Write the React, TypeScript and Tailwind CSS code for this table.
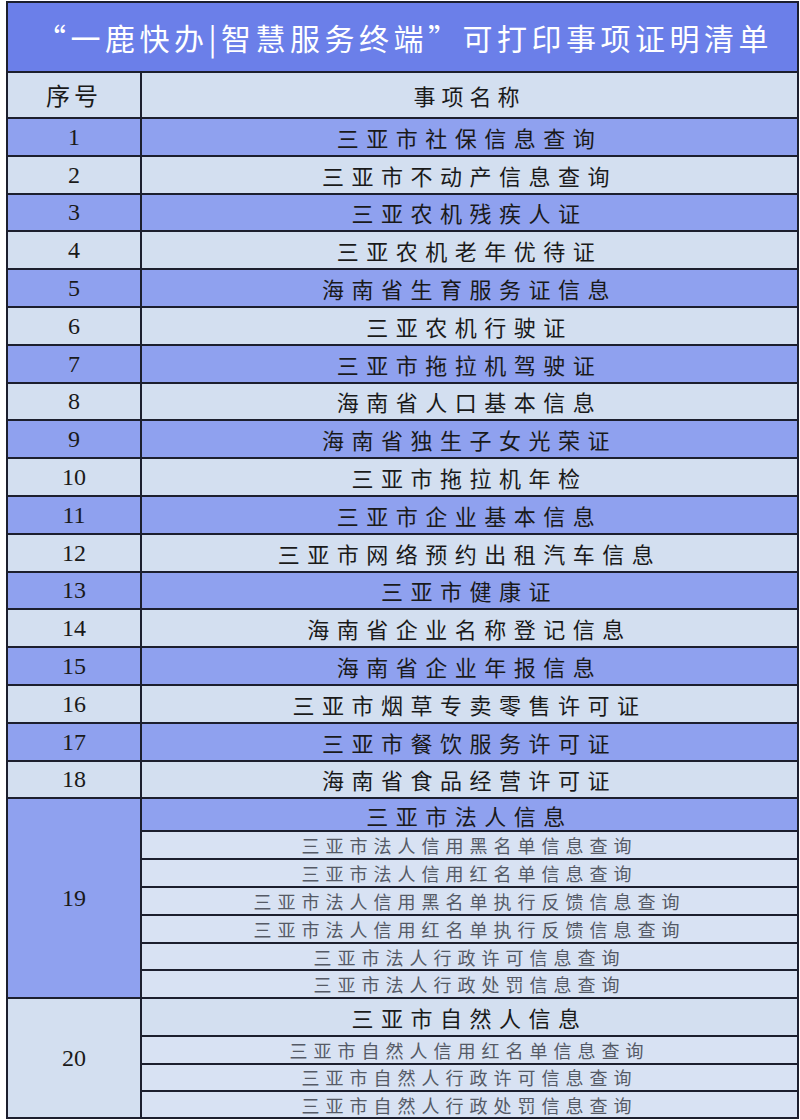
const rows = [
  "三亚市社保信息查询",
  "三亚市不动产信息查询",
  "三亚农机残疾人证",
  "三亚农机老年优待证",
  "海南省生育服务证信息",
  "三亚农机行驶证",
  "三亚市拖拉机驾驶证",
  "海南省人口基本信息",
  "海南省独生子女光荣证",
  "三亚市拖拉机年检",
  "三亚市企业基本信息",
  "三亚市网络预约出租汽车信息",
  "三亚市健康证",
  "海南省企业名称登记信息",
  "海南省企业年报信息",
  "三亚市烟草专卖零售许可证",
  "三亚市餐饮服务许可证",
  "海南省食品经营许可证",
];

const legal = [
  "三亚市法人信用黑名单信息查询",
  "三亚市法人信用红名单信息查询",
  "三亚市法人信用黑名单执行反馈信息查询",
  "三亚市法人信用红名单执行反馈信息查询",
  "三亚市法人行政许可信息查询",
  "三亚市法人行政处罚信息查询",
];

const natural = [
  "三亚市自然人信用红名单信息查询",
  "三亚市自然人行政许可信息查询",
  "三亚市自然人行政处罚信息查询",
];

const cjk = "font-['Noto_Sans_CJK_SC',sans-serif]";
const num = "font-['Liberation_Serif','Noto_Sans_CJK_SC',serif]";

export default function App() {
  return (
    <div className="w-[800px] h-[1120px] bg-white pl-[6px] pt-[1px] leading-none">
      <div className="w-[793px] border-2 border-[#1c1f2e] text-[#1a1a1a]">
        {/* Title */}
        <div
          className={`h-[70px] flex items-center justify-center pl-[4px] bg-[#6b7fe9] border-b-2 border-[#1c1f2e] text-white text-[30px] tracking-[4.5px] ${cjk}`}
        >
          “一鹿快办|智慧服务终端”可打印事项证明清单
        </div>

        {/* Header */}
        <div className="grid grid-cols-[134px_1fr] h-[46px] bg-[#d3dff0] border-b-2 border-[#1c1f2e]">
          <div className={`flex items-center justify-center border-r-2 border-[#1c1f2e] text-[24px] tracking-[4px] ${cjk}`}>
            序号
          </div>
          <div className={`flex items-center justify-center text-[22px] tracking-[6px] ${cjk}`}>
            事项名称
          </div>
        </div>

        {/* Rows 1-18 */}
        {rows.map((name, i) => (
          <div
            key={name}
            className={`grid grid-cols-[134px_1fr] h-[37.8px] border-b-2 border-[#1c1f2e] ${
              i % 2 === 0 ? "bg-[#8fa1ef]" : "bg-[#d3dff0]"
            }`}
          >
            <div className={`flex items-center justify-center border-r-2 border-[#1c1f2e] text-[24px] ${num}`}>
              {i + 1}
            </div>
            <div className={`flex items-center justify-center text-[22px] tracking-[7.5px] ${cjk}`}>
              {name}
            </div>
          </div>
        ))}

        {/* Row 19 */}
        <div className="grid grid-cols-[134px_1fr] h-[200px] border-b-2 border-[#1c1f2e]">
          <div className={`flex items-center justify-center bg-[#8fa1ef] border-r-2 border-[#1c1f2e] text-[24px] ${num}`}>
            19
          </div>
          <div className="flex flex-col min-h-0">
            <div className={`h-[33px] flex items-center justify-center bg-[#8fa1ef] border-b-2 border-[#1c1f2e] text-[22px] tracking-[7.5px] ${cjk}`}>
              三亚市法人信息
            </div>
            {legal.map((s, i) => (
              <div
                key={s}
                className={`flex-1 min-h-0 flex items-center justify-center bg-[#d8e2f3] text-[18px] tracking-[6px] text-[#555a66] ${cjk} ${
                  i < legal.length - 1 ? "border-b-2 border-[#1c1f2e]" : ""
                }`}
              >
                {s}
              </div>
            ))}
          </div>
        </div>

        {/* Row 20 */}
        <div className="grid grid-cols-[134px_1fr] h-[118px]">
          <div className={`flex items-center justify-center bg-[#d3dff0] border-r-2 border-[#1c1f2e] text-[24px] ${num}`}>
            20
          </div>
          <div className="flex flex-col min-h-0">
            <div className={`h-[38px] flex items-center justify-center bg-[#d3dff0] border-b-2 border-[#1c1f2e] text-[22px] tracking-[7.5px] ${cjk}`}>
              三亚市自然人信息
            </div>
            {natural.map((s, i) => (
              <div
                key={s}
                className={`flex-1 min-h-0 flex items-center justify-center bg-[#d8e2f3] text-[18px] tracking-[6px] text-[#555a66] ${cjk} ${
                  i < natural.length - 1 ? "border-b-2 border-[#1c1f2e]" : ""
                }`}
              >
                {s}
              </div>
            ))}
          </div>
        </div>
      </div>
    </div>
  );
}
